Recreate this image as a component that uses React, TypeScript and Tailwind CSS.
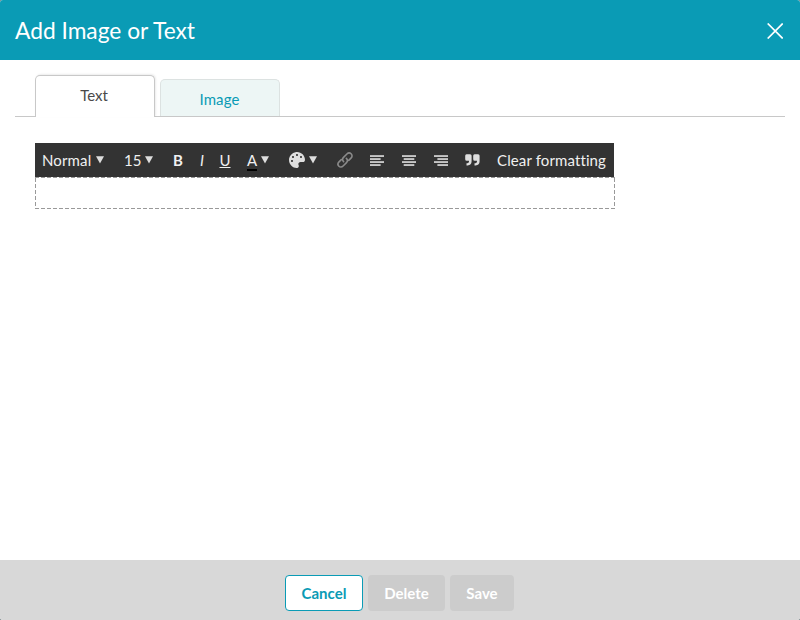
import React from "react";
import { FaPalette } from "react-icons/fa";

const Caret = () => (
  <svg className="block h-[8px] w-[8px] shrink-0" viewBox="0 0 8 8" fill="#dedede">
    <path d="M0 0.3H8L4 7.5Z" />
  </svg>
);

type Align = "left" | "center" | "right";

const AlignIcon = ({ align }: { align: Align }) => {
  const widths = [14, 10.6, 14, 10.6];
  return (
    <svg className="block h-[11px] w-[14px]" viewBox="0 0 14 11" fill="#d6d6d6">
      {widths.map((w, i) => (
        <rect
          key={i}
          x={align === "left" ? 0 : align === "center" ? (14 - w) / 2 : 14 - w}
          y={i * 3 + 0.2}
          width={w}
          height={1.7}
        />
      ))}
    </svg>
  );
};

const LinkIcon = () => (
  <svg className="block h-[16px] w-[16px]" viewBox="0 0 16 16" fill="none" stroke="#8a8a8a" strokeWidth="1.6" strokeLinecap="round">
    <path d="M6.6 9.6C5.3 8.2 5.4 6.500 6.500 5.400L9.900 2C11.200 .7 12.900 .6 14.100 1.800C15.400 3.100 15.300 4.800 14 6.100L11.700 8.400" />
    <path d="M9.400 6.400C10.700 7.800 10.600 9.500 9.500 10.600L6.100 14C4.800 15.300 3.100 15.400 1.900 14.200C.6 12.900 .7 11.200 2 9.900L4.300 7.600" />
  </svg>
);

const QuoteIcon = () => (
  <svg className="block h-[12px] w-[15px]" viewBox="0 0 15 12" fill="#dedede">
    <path d="M1.500 .3H5.100Q6.600 .3 6.600 1.800V7.300Q6.600 11.300 2.600 11.500H1.500V9.300H2.300Q4 9.200 4 7.600V6.800H1.700Q.2 6.800 .2 5.300V1.800Q.2 .3 1.500 .3Z" />
    <path d="M9.500 .3H13.100Q14.600 .3 14.600 1.800V7.300Q14.600 11.300 10.600 11.500H9.500V9.300H10.300Q12 9.200 12 7.600V6.800H9.700Q8.200 6.800 8.200 5.300V1.800Q8.200 .3 9.500 .3Z" />
  </svg>
);

const Toolbar = () => (
  <div className="flex h-[34px] w-[579px] items-center bg-[#333333] text-[15px] leading-[34px] whitespace-nowrap text-[#f0f0f0]">
    <button className="flex w-[82px] items-center justify-between pr-[13px] pl-[7px] tracking-[0.14px]">
      Normal
      <Caret />
    </button>
    <button className="flex w-[49px] items-center justify-between pr-[13px] pl-[7px]">
      15
      <Caret />
    </button>
    <button className="w-[24px] text-center font-bold">B</button>
    <button className="w-[24px] text-center italic">I</button>
    <button className="w-[24px] pr-[2px] text-center underline">U</button>
    <button className="flex w-[42px] items-center justify-between pr-[11px] pl-[9px]">
      <span className="mt-px flex h-[21px] w-[10px] items-start justify-center border-b-2 border-black leading-[20px]">
        A
      </span>
      <Caret />
    </button>
    <button className="flex w-[49px] items-center justify-between pr-[12px] pl-[9px]">
      <FaPalette className="h-[16px] w-[16px] text-[#dedede]" />
      <Caret />
    </button>
    <button className="flex w-[32px] justify-center"><LinkIcon /></button>
    <button className="flex w-[32px] justify-center"><AlignIcon align="left" /></button>
    <button className="flex w-[32px] justify-center"><AlignIcon align="center" /></button>
    <button className="flex w-[32px] justify-center"><AlignIcon align="right" /></button>
    <button className="flex w-[32px] justify-center pr-px"><QuoteIcon /></button>
    <button className="pl-[8px] tracking-[0.12px]">Clear formatting</button>
  </div>
);

const DashRow = () => (
  <div className="h-px w-full bg-[repeating-linear-gradient(90deg,#999999_0,#999999_4px,transparent_4px,transparent_6px)]" />
);

const DashColumn = () => (
  <div className="h-full w-px bg-[repeating-linear-gradient(180deg,#999999_0,#999999_4px,transparent_4px,transparent_6px)]" />
);

export default function App() {
  return (
    <div className="h-[620px] w-[800px] bg-[#7f8c8e] font-['Lato',sans-serif]">
      <div className="flex h-full flex-col overflow-hidden rounded-[3px] bg-white">
        <header className="flex h-[60px] items-center justify-between bg-[#0a9bb5] pr-[17px] pl-[15px] text-white">
          <h1 className="pt-px text-[22.75px] leading-[30px]">Add Image or Text</h1>
          <svg className="mt-[2px] h-[16px] w-[16px]" viewBox="0 0 16 16" stroke="white" strokeWidth="1.7">
            <path d="M.7 .5L15.700 15.500M15.700 .5L.7 15.500" />
          </svg>
        </header>

        <main className="flex-1 px-[15px] pt-[15px]">
          <nav className="flex h-[42px] items-end border-b border-[#c8c8c8] pl-[20px] text-[15px]">
            <div className="-mb-px h-[42px] w-[120px] rounded-t-[5px] border border-b-0 border-[#c8c8c8] bg-white pr-[2px] text-center leading-[39px] text-[#4a4a4a] shadow-[1px_-1px_2px_rgba(0,0,0,0.08)]">
              Text
            </div>
            <div className="ml-[5px] h-[37px] w-[120px] rounded-t-[5px] border border-b-0 border-[#dce2e1] bg-[#edf6f5] pr-px text-center leading-[39px] tracking-[0.1px] text-[#0a9bb5]">
              Image
            </div>
          </nav>

          <section className="mt-[26px] ml-[20px] w-[580px]">
            <Toolbar />
            <div className="flex h-[32px] flex-col">
              <DashRow />
              <div className="flex flex-1 justify-between">
                <DashColumn />
                <DashColumn />
              </div>
              <DashRow />
            </div>
          </section>
        </main>

        <footer className="flex h-[60px] justify-center gap-[5px] bg-[#d8d8d8] pt-[15px] pr-px text-[15px] font-bold">
          <button className="h-[36px] w-[78px] rounded-[4px] border border-[#0a9bb5] bg-white text-[#0a9bb5]">Cancel</button>
          <button className="h-[36px] w-[77px] rounded-[4px] bg-[#cccccc] text-white">Delete</button>
          <button className="h-[36px] w-[64px] rounded-[4px] bg-[#cccccc] text-white">Save</button>
        </footer>
      </div>
    </div>
  );
}
